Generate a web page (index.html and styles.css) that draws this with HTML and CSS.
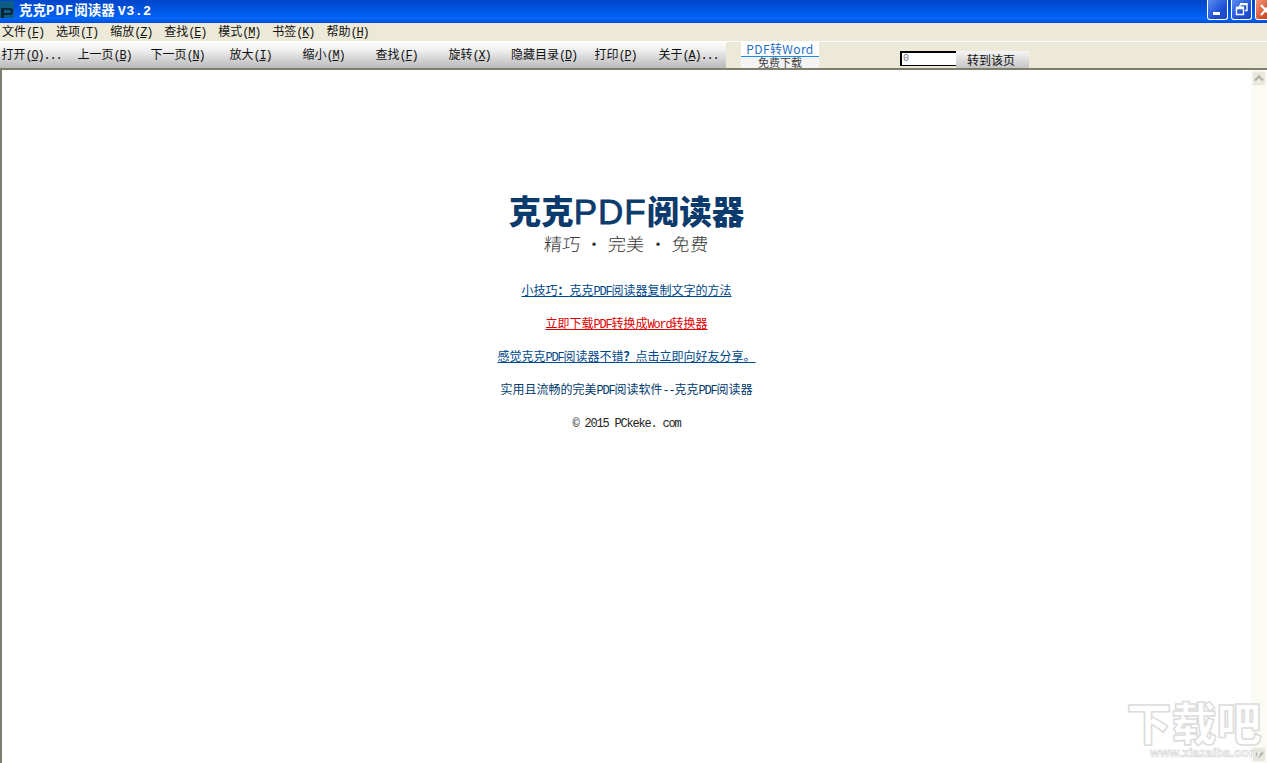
FILE: index.html
```html
<!DOCTYPE html>
<html lang="zh-CN">
<head>
<meta charset="utf-8">
<title>克克PDF阅读器</title>
<link rel="stylesheet" href="styles.css">
</head>
<body>
<div class="window">
  <header class="titlebar">
    <svg class="appicon" width="14" height="17" viewBox="0 0 14 17"><rect width="14" height="17" fill="#0d5d85"/><path d="M1 7h9a3 3 0 0 1 3 3v1a3 3 0 0 1-3 3H4v3H1zM4 9v3h5.500a1.500 1.500 0 0 0 0-3z" fill="#0a2438"/></svg>
    <span class="title">克克<span class="title-l">PDF</span>阅读器 <span class="title-l ver">V3.2</span></span>
    <div class="winbtns">
      <div class="wb wb-blue"><svg width="20" height="20" viewBox="0 0 20 20"><rect x="5" y="12" width="7" height="3" fill="#fff"/></svg></div>
      <div class="wb wb-blue"><svg width="20" height="20" viewBox="0 0 20 20"><path d="M8 4.500h7v6h-2M4.500 8.500h7v6h-7z M8 4.500v3" fill="none" stroke="#fff" stroke-width="1.400"/><path d="M4 7.500h8M8 4h7.500" stroke="#fff" stroke-width="2"/></svg></div>
      <div class="wb wb-red"><svg width="20" height="20" viewBox="0 0 20 20"><path d="M5 5l9 10M14 5l-9 10" stroke="#fff" stroke-width="2.200"/></svg></div>
    </div>
  </header>
  <nav class="menubar">
    <span>文件<span class="l">(<u>F</u>)</span></span>
    <span>选项<span class="l">(<u>T</u>)</span></span>
    <span>缩放<span class="l">(<u>Z</u>)</span></span>
    <span>查找<span class="l">(<u>E</u>)</span></span>
    <span>模式<span class="l">(<u>M</u>)</span></span>
    <span>书签<span class="l">(<u>K</u>)</span></span>
    <span>帮助<span class="l">(<u>H</u>)</span></span>
  </nav>
  <div class="toolbar">
    <div class="tools">
      <span class="tool">打开<span class="l">(<u>O</u>)...</span></span>
      <span class="tool">上一页<span class="l">(<u>B</u>)</span></span>
      <span class="tool">下一页<span class="l">(<u>N</u>)</span></span>
      <span class="tool">放大<span class="l">(<u>I</u>)</span></span>
      <span class="tool">缩小<span class="l">(<u>M</u>)</span></span>
      <span class="tool">查找<span class="l">(<u>F</u>)</span></span>
      <span class="tool">旋转<span class="l">(<u>X</u>)</span></span>
      <span class="tool">隐藏目录<span class="l">(<u>D</u>)</span></span>
      <span class="tool">打印<span class="l">(<u>P</u>)</span></span>
      <span class="tool">关于<span class="l">(<u>A</u>)...</span></span>
    </div>
    <div class="promo">
      <div class="promo-top">PDF转Word</div>
      <div class="promo-bottom">免费下载</div>
    </div>
    <div class="goto">
      <div class="pageinput">0</div>
      <div class="gobtn">转到该页</div>
    </div>
  </div>
  <main class="viewer">
    <section class="doc">
      <div class="logo">克克<span class="logo-l">PDF</span>阅读器</div>
      <div class="slogan">精巧 · 完美 · 免费</div>
      <ul class="lines">
        <li><a class="link">小技巧<span class="tc">：</span>克克<span class="l">PDF</span>阅读器复制文字的方法</a></li>
        <li><a class="link red">立即下载<span class="l">PDF</span>转换成<span class="l">Word</span>转换器</a></li>
        <li><a class="link">感觉克克<span class="l">PDF</span>阅读器不错<span class="tc">？</span>点击立即向好友分享。</a></li>
        <li>实用且流畅的完美<span class="l">PDF</span>阅读软件<span class="l">--</span>克克<span class="l">PDF</span>阅读器</li>
        <li class="copy"><span class="l">© 2015 PCkeke. com</span></li>
      </ul>
    </section>
    <aside class="scrollbar">
      <div class="sb-btn"><svg width="14" height="15" viewBox="0 0 14 15"><path d="M3 9.500l4-4 4 4" fill="none" stroke="#b4b4a8" stroke-width="2.400"/></svg></div>
      <div class="sb-btn"><svg width="14" height="15" viewBox="0 0 14 15"><path d="M3 5.500l4 4 4-4" fill="none" stroke="#b4b4a8" stroke-width="2.400"/></svg></div>
    </aside>
    <div class="watermark">
      <div class="wm-big">下载吧</div>
      <div class="wm-url">www.xiazaiba.com</div>
    </div>
  </main>
</div>
</body>
</html>
```
FILE: styles.css
```css
* { box-sizing: border-box; }
html, body { margin: 0; padding: 0; height: 100%; overflow: hidden; background: #fff; }
body { font: 12px/16px "Noto Sans CJK SC", sans-serif; color: #000; }
.l { font-family: "Liberation Mono", monospace; font-size: 12px; letter-spacing: -1.200px; }
.tc { font-family: "Noto Sans CJK TC", sans-serif; font-weight: 700; }
.window { display: flex; flex-direction: column; width: 1267px; height: 763px; }

.titlebar {
  flex: 0 0 23px; display: flex; align-items: center; position: relative;
  background: linear-gradient(#0046c8 0, #0052dc 8px, #005ae8 13px, #0066fa 18px, #0060f0 20px, #0048d8 23px);
}
.appicon { align-self: flex-start; margin: 1px 5px 0 0; }
.title { color: #fff; font-weight: 700; font-size: 13.500px; line-height: 18px; white-space: pre; margin-top: -3px; }
.title-l { font-family: "Liberation Mono", monospace; font-size: 14px; font-weight: 700; letter-spacing: 1px; }
.ver { font-size: 13.400px; letter-spacing: 0.400px; }
.winbtns { margin-left: auto; display: flex; gap: 3px; margin-right: -9px; align-self: flex-start; }
.wb { width: 21px; height: 20px; border: 1px solid #fff; border-top: 0; border-radius: 0 0 3px 3px; }
.wb svg { display: block; margin: 0; }
.wb-blue { background: linear-gradient(135deg, #5b8cf0, #1d50d8 60%, #1c46c0); }
.wb-red { background: linear-gradient(135deg, #f0977a, #d9512c 60%, #c03a1c); }

.menubar {
  flex: 0 0 18px; display: flex; gap: 12px; padding-left: 2px; align-items: center;
  background: #ece9d8; color: #111; white-space: nowrap;
}
.menubar span { display: block; }
.menubar .l { display: inline; }

.toolbar {
  flex: 0 0 29px; display: flex; background: #ece9d8; border-top: 1px solid #fff;
  border-bottom: 2px solid #7f7d6c;
}
.tools { width: 726px; display: grid; grid-template-columns: repeat(10, 73px); background: linear-gradient(#fefefe, #f0f0f0 30%, #b9b9b9); }
.tool { text-align: center; padding-right: 10px; line-height: 24px; white-space: nowrap; color: #111; }

.promo { width: 78px; margin-left: 15px; background: #fff; display: flex; flex-direction: column; }
.promo-top { height: 14px; line-height: 13px; border-bottom: 1px solid #1b8de8; box-sizing: content-box; color: #1f6fc4; font-size: 12px; text-align: center; letter-spacing: .400px; }
.promo-bottom { color: #444; font-size: 11px; line-height: 11px; text-align: center; background: #f4f4f4; height: 11px; }

.goto { display: flex; margin-left: 81px; padding-top: 9px; align-items: flex-start; }
.pageinput { width: 57px; height: 15px; border: 1px solid #000; border-width: 2px 1px 1px 2px; background: #fff; font: 10px/11px "Liberation Mono", monospace; color: #777; padding-left: 1px; }
.gobtn { width: 73px; height: 17px; line-height: 17px; padding-left: 11px; background: linear-gradient(#f6f6f6, #c4c4c4); color: #111; margin-left: -1px; }

.viewer { flex: 1; display: flex; position: relative; min-height: 0; border-left: 2px solid #7f7d6c; }
.doc { flex: 1; display: flex; flex-direction: column; align-items: center; padding-top: 118px; color: #003a6e; }
.logo { font-size: 32.500px; line-height: 44px; font-weight: 900; color: #0b3a6c; white-space: nowrap; height: 44px; }
.logo-l { font: 400 35px/44px "Liberation Sans", sans-serif; -webkit-text-stroke: 0.800px #0b3a6c; letter-spacing: 1px; }
.slogan { font-size: 18px; line-height: 24px; font-weight: 300; color: #333; white-space: pre; letter-spacing: 0.400px; transform: skewX(-4deg); margin-top: -1px; }
.lines { list-style: none; margin: 18px 0 0; padding: 0; display: flex; flex-direction: column; text-align: center; white-space: nowrap; }
.lines li { height: 33px; line-height: 33px; }
.link { color: #00488c; text-decoration: underline; }
.red { color: #e00000; }
.copy { color: #222; }

.scrollbar { flex: 0 0 16px; background: #fbfbf4; display: flex; flex-direction: column; justify-content: space-between; padding: 1px 1px 1px 1px; }
.sb-btn { width: 14px; height: 15px; border: 1px solid #f6f6ee; background: #e8e8de; border-radius: 2px; }
.sb-btn svg { display: block; margin: -1px; }

.watermark { position: absolute; left: 1124px; top: 629px; width: 136px; text-align: center; color: #fff; }
.wm-big { font-size: 45px; line-height: 46px; font-weight: 900; -webkit-text-stroke: 1.500px #dcdcdc; white-space: nowrap; }
.wm-url { font: 700 12.500px/12px "Liberation Sans", sans-serif; -webkit-text-stroke: 0.600px #cfcfcf; white-space: nowrap; text-align: right; padding-right: 2px; margin-top: 2px; }
```
